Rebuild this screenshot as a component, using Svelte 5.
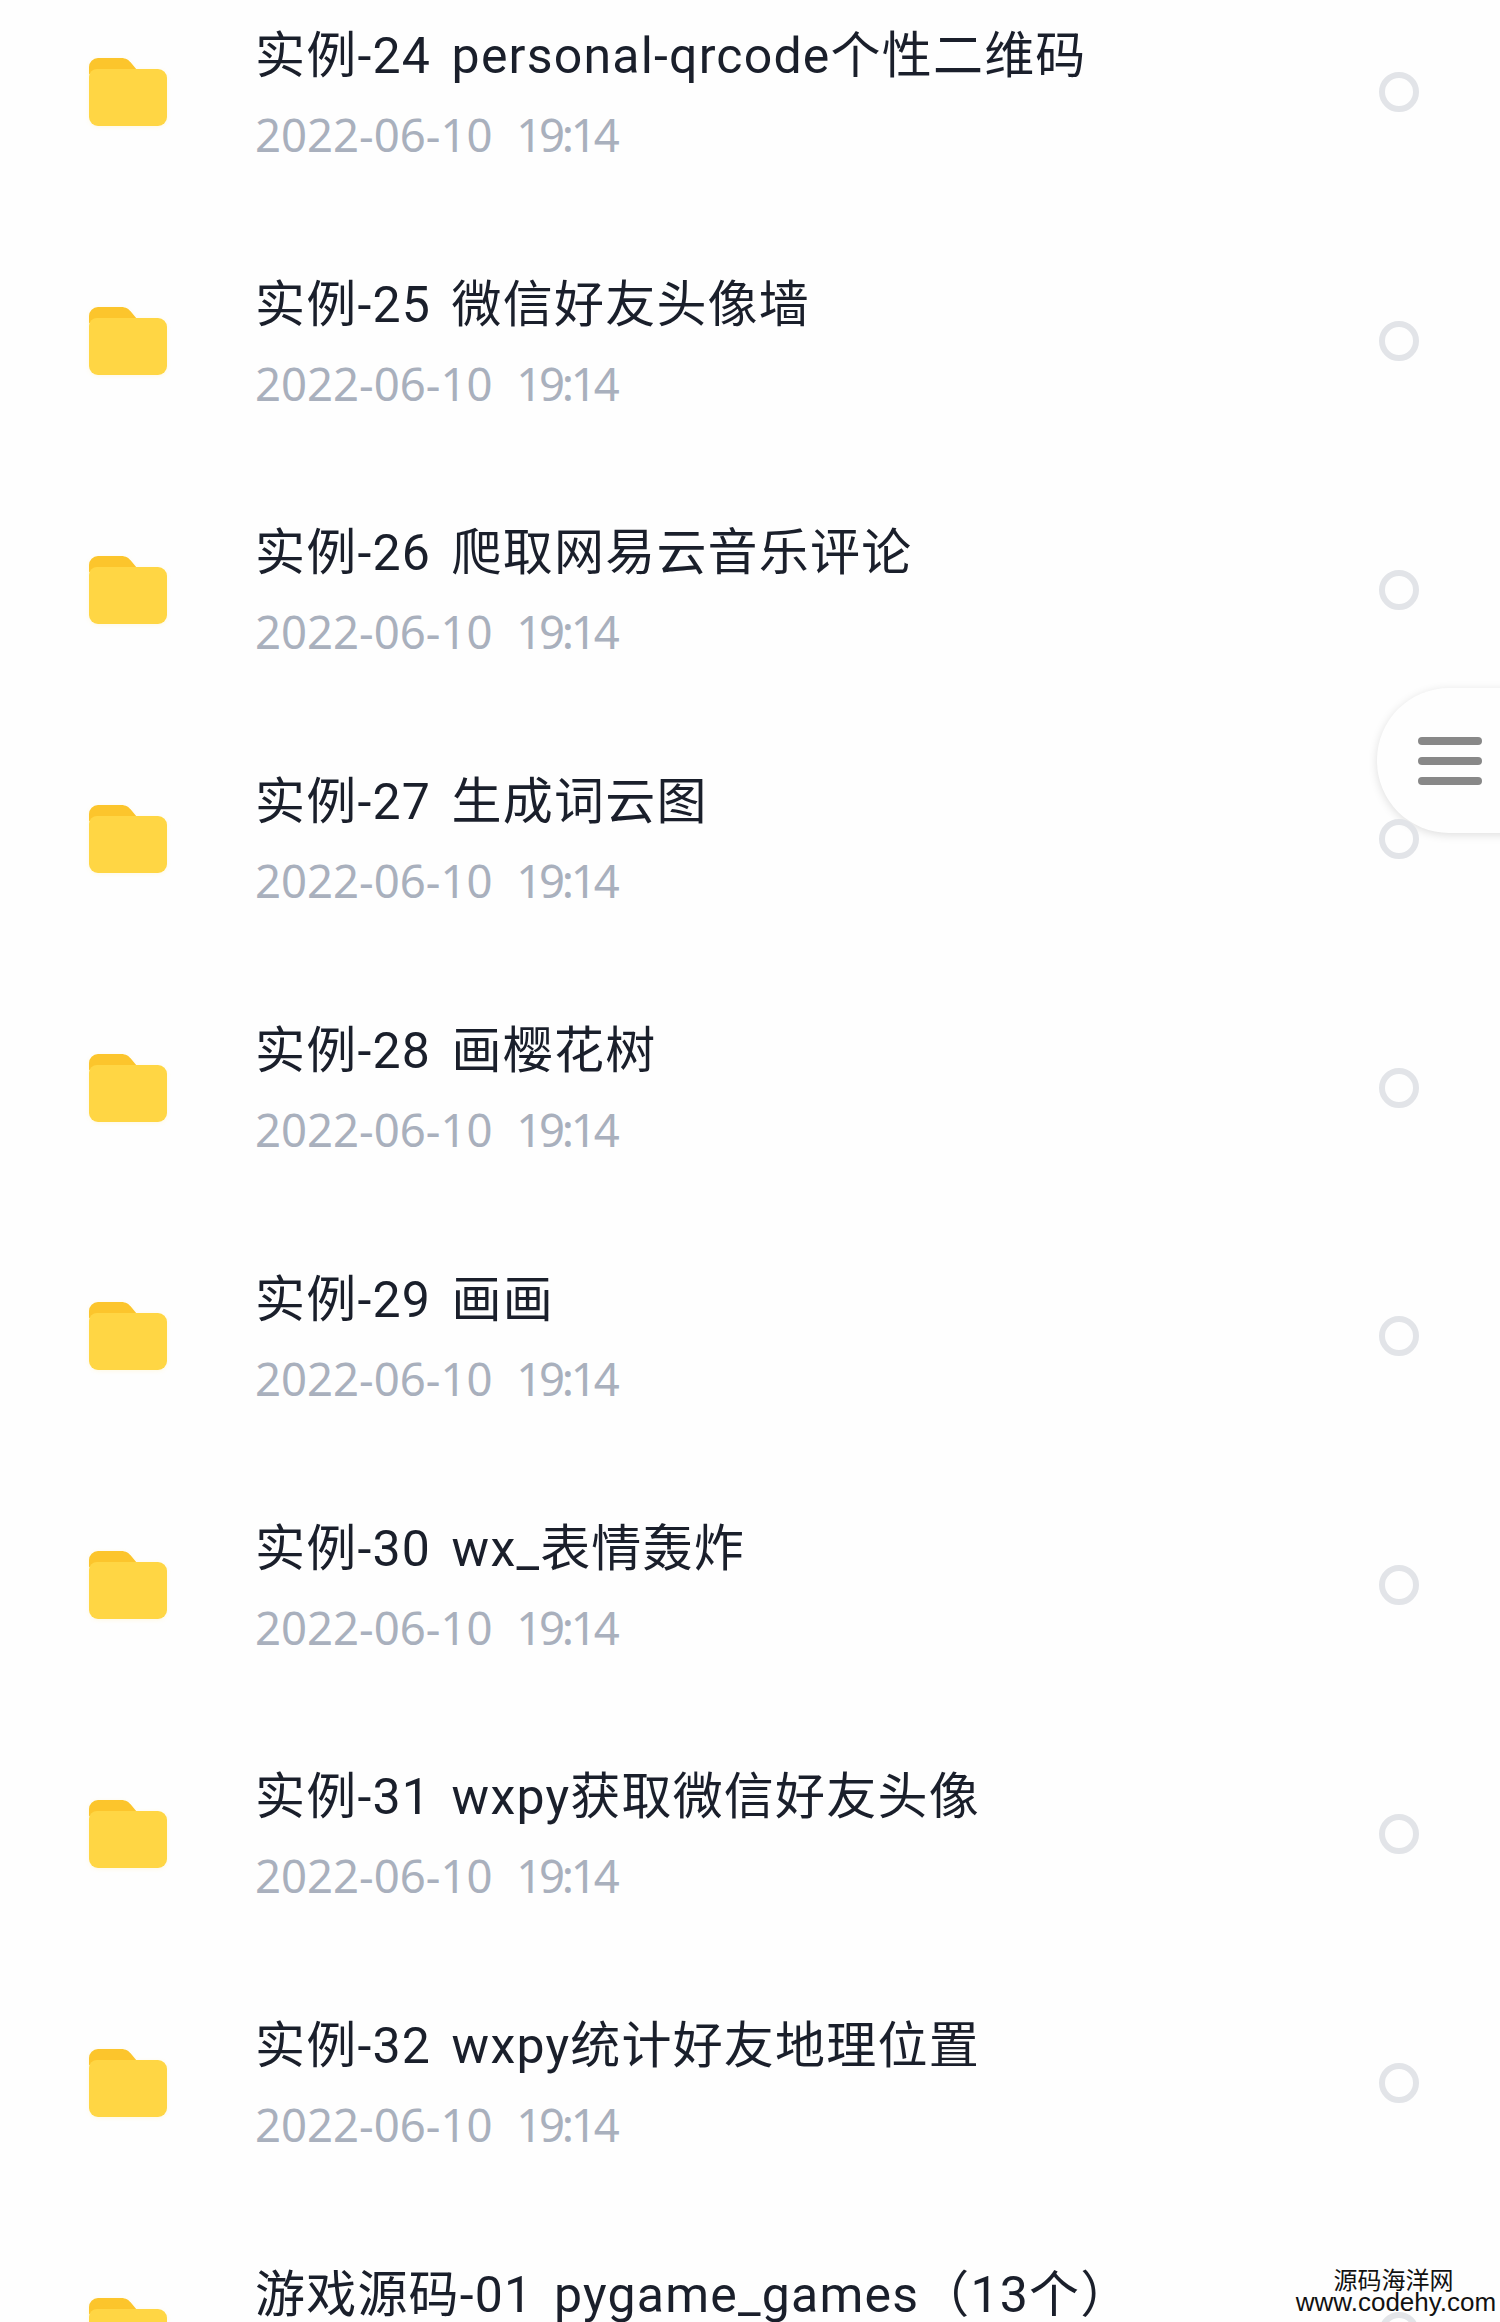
<script>
  let files = [
    "实例-24 personal-qrcode个性二维码",
    "实例-25 微信好友头像墙",
    "实例-26 爬取网易云音乐评论",
    "实例-27 生成词云图",
    "实例-28 画樱花树",
    "实例-29 画画",
    "实例-30 wx_表情轰炸",
    "实例-31 wxpy获取微信好友头像",
    "实例-32 wxpy统计好友地理位置",
    "游戏源码-01 pygame_games（13个）"
  ]
</script>

<div class="page">
  <div class="list">
    {#each files as name}
      <div class="row">
        <svg class="folder" viewBox="0 0 78 68" width="78" height="68">
          <path d="M0 9a9 9 0 0 1 9-9h23c5 0 8 2 11 6l5 6H40L0 16z" fill="#fcc52c" />
          <path d="M0 19a8 8 0 0 1 8-8h61a9 9 0 0 1 9 9v39a9 9 0 0 1-9 9H9a9 9 0 0 1-9-9z" fill="#ffd644" />
        </svg>
        <div class="info">
          <div class="name">{name}</div>
          <div class="date">2022-06-10&nbsp;&nbsp;<span class="time">19:14</span></div>
        </div>
        <div class="check"></div>
      </div>
    {/each}
  </div>

  <div class="float-btn">
    <span></span>
    <span></span>
    <span></span>
  </div>

  <div class="watermark">
    <div class="wm-cn">源码海洋网</div>
    <div class="wm-en">www.codehy.com</div>
  </div>
</div>

<style>
  :global(body) {
    background: #fefefe;
  }

  .page {
    position: relative;
    width: 1500px;
    height: 2322px;
    overflow: hidden;
    background: #fefefe;
    font-family: "Noto Sans", "Noto Sans CJK SC", sans-serif;
  }

  .list {
    margin-top: -36px;
  }

  .row {
    display: flex;
    align-items: center;
    height: 248.8px;
    padding-left: 89px;
    padding-right: 81px;
    box-sizing: border-box;
  }

  .folder {
    flex: none;
    margin-top: 8px;
    filter: drop-shadow(0 1px 2px rgba(255, 214, 68, 0.15));
  }

  .info {
    flex: 1;
    margin-left: 88px;
    margin-top: 11px;
  }

  .name {
    font-family: Roboto, "Noto Sans CJK SC", sans-serif;
    font-size: 50px;
    line-height: 56px;
    margin-top: 5px;
    letter-spacing: 1.2px;
    word-spacing: 7px;
    color: #1a1f2b;
    white-space: nowrap;
  }

  .date {
    font-size: 45.5px;
    line-height: 62px;
    margin-top: 19px;
    color: #a9b0bd;
    white-space: nowrap;
  }

  .time {
    letter-spacing: -3.2px;
  }

  .check {
    position: relative;
    z-index: 2;
    flex: none;
    width: 40px;
    height: 40px;
    box-sizing: border-box;
    border: 6px solid #e2e4e8;
    border-radius: 50%;
    margin-top: 8px;
  }

  .float-btn {
    position: absolute;
    z-index: 1;
    left: 1377px;
    top: 688px;
    width: 140px;
    height: 145px;
    box-sizing: border-box;
    padding-left: 41px;
    border-radius: 72px 0 0 72px;
    background: #fefefe;
    box-shadow: 0 2px 10px rgba(0, 0, 0, 0.13);
    display: flex;
    flex-direction: column;
    justify-content: center;
    gap: 12px;
  }

  .float-btn span {
    display: block;
    width: 64px;
    height: 8px;
    border-radius: 4px;
    background: #888888;
  }

  .watermark {
    position: absolute;
    z-index: 3;
    right: 2px;
    top: 2271px;
    width: 204px;
    text-align: center;
    color: #111111;
    font-family: "Liberation Sans", "Noto Sans CJK SC", sans-serif;
  }

  .wm-cn {
    font-size: 24px;
    line-height: 20px;
    padding-right: 5px;
  }

  .wm-en {
    font-size: 26px;
    line-height: 22px;
  }
</style>
